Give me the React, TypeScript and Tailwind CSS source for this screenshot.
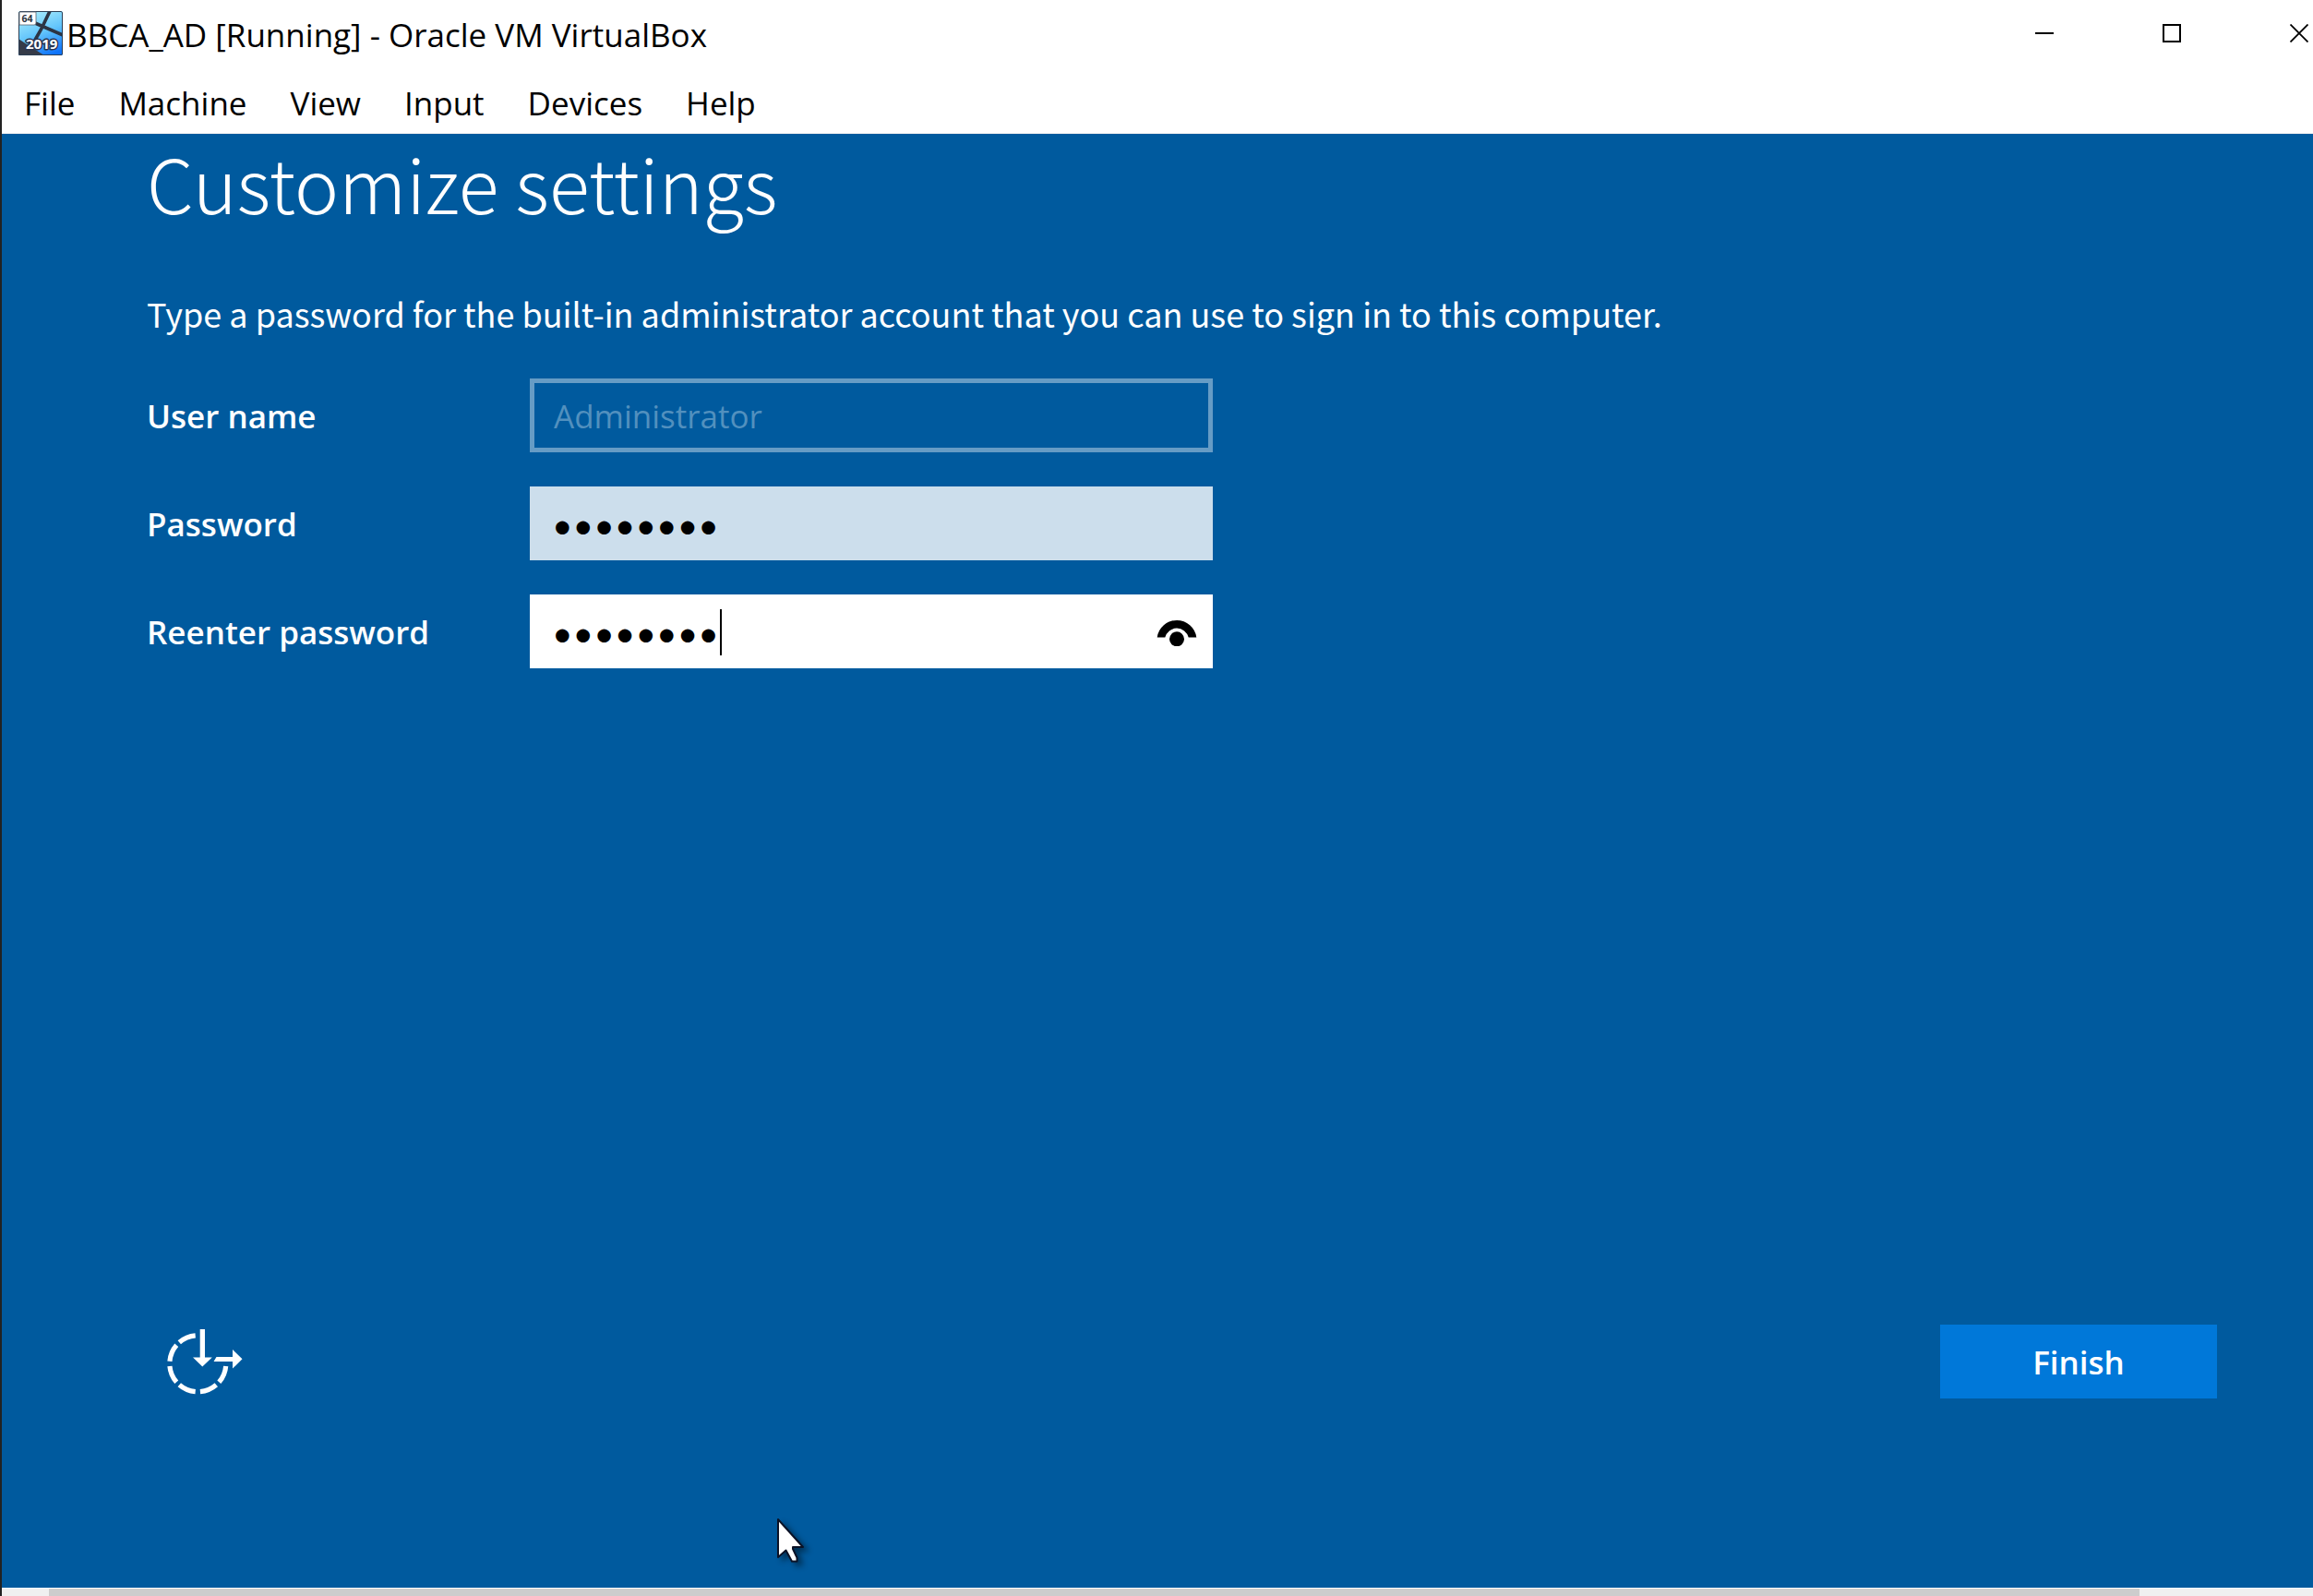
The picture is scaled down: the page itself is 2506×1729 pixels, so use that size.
import React, { useState } from 'react';

const menuItems = ['File', 'Machine', 'View', 'Input', 'Devices', 'Help'];

const GuestIcon: React.FC = () => (
  <svg viewBox="0 0 48 48" className="w-12 h-12 shrink-0" aria-hidden="true">
    <defs>
      <linearGradient id="sky" x1="0.3" y1="0" x2="0.7" y2="1">
        <stop offset="0" stopColor="#a9ecfc" />
        <stop offset="0.5" stopColor="#62c4fb" />
        <stop offset="1" stopColor="#0f74fa" />
      </linearGradient>
      <clipPath id="tile">
        <rect width="48" height="48" rx="1.5" />
      </clipPath>
    </defs>
    <g clipPath="url(#tile)">
      <rect width="48" height="48" fill="url(#sky)" />
      <path d="M34.500 -1 L25 19 L17 33 M18 13 L49 26.500" fill="none" stroke="#2c3444" strokeWidth="3.600" />
      <path d="M0 30 L9 36 L28 48 H0 Z" fill="#363b48" />
      <rect x="0.500" y="0.500" width="47" height="47" rx="1.500" fill="none" stroke="#2c3f55" />
      <path d="M1 1 H19 V13 a2 2 0 0 1 -2 2 H1 Z" fill="#fff" stroke="#59636f" strokeWidth="0.800" />
    </g>
    <text x="3.500" y="12" fontSize="10.500" fontWeight="700" fill="#2f3542" fontFamily="Open Sans, sans-serif">64</text>
    <text
      x="8"
      y="41"
      fontSize="15"
      fontWeight="700"
      fill="#fff"
      stroke="#2a3550"
      strokeWidth="3"
      paintOrder="stroke"
      strokeLinejoin="round"
      fontFamily="Open Sans, sans-serif"
    >
      2019
    </text>
  </svg>
);

const EaseOfAccessIcon: React.FC = () => (
  <svg viewBox="0 0 84 76" className="w-[84px] h-[76px]" aria-hidden="true">
    <circle
      cx="34.300"
      cy="40.300"
      r="30.500"
      fill="none"
      stroke="#fff"
      strokeWidth="5.200"
      pathLength="360"
      strokeDasharray="36 8 36 10 36 8 36 10 36 8 36 100"
      strokeDashoffset="-5"
    />
    <path d="M36.700 3 H42 V33.500 H49.800 L39.300 43.500 L29 33.500 H36.700 Z" fill="#fff" />
    <path d="M54.500 33 H72 V25 L82.500 35.300 L72 45.600 V38 H51.500 Z" fill="#fff" />
  </svg>
);

const Cursor: React.FC = () => (
  <svg
    viewBox="0 0 40 56"
    className="absolute left-[837px] top-[1642px] w-10 h-14 pointer-events-none drop-shadow-[5px_4px_3px_rgba(0,0,0,0.45)]"
    aria-hidden="true"
  >
    <path
      d="M4 4 V45 L12.500 37.500 L19 49.500 H24.500 V45.500 L20 36 V34 H31 Z"
      fill="#fff"
      stroke="#0b1226"
      strokeWidth="2"
      strokeLinejoin="round"
    />
  </svg>
);

const labelClass = 'pt-0.5 font-semibold';
const passwordClass = "w-full h-20 pt-0.5 pl-6 rounded-none outline-none text-black text-[39px] font-['Lato',sans-serif]";

const App: React.FC = () => {
  const [password, setPassword] = useState('password');
  const [confirm, setConfirm] = useState('password');
  const [reveal, setReveal] = useState(false);

  return (
    <div className="relative min-h-screen flex flex-col bg-white border-l-2 border-[#222222] text-black text-[35px] font-['Open_Sans',sans-serif] overflow-hidden">
      {/* Title bar */}
      <header className="flex items-center h-20 pb-2 pl-[18px]">
        <GuestIcon />
        <span className="pt-1 pl-1 leading-[48px] whitespace-nowrap">BBCA_AD [Running] - Oracle VM VirtualBox</span>
        <div className="flex ml-auto h-full">
          <button aria-label="Minimize" className="flex items-center justify-center w-[138px]">
            <span className="w-5 h-0.5 bg-black" />
          </button>
          <button aria-label="Maximize" className="flex items-center justify-center w-[138px]">
            <span className="w-5 h-5 border-2 border-black" />
          </button>
          <button aria-label="Close" className="flex items-center justify-end w-[84px] pr-[5px]">
            <svg viewBox="0 0 20 20" className="w-5 h-5" aria-hidden="true">
              <path d="M0.500 0.500 L19.500 19.500 M19.500 0.500 L0.500 19.500" stroke="#000" strokeWidth="1.800" />
            </svg>
          </button>
        </div>
      </header>

      {/* Menu bar */}
      <nav className="flex items-center gap-[47px] h-[65px] pl-6 border-b border-[#f0f0f0]">
        {menuItems.map((item) => (
          <button key={item} className="leading-[48px]">
            {item}
          </button>
        ))}
      </nav>

      {/* Guest screen */}
      <main className="flex-1 flex flex-col bg-[#005a9e] text-white pt-0.5 pl-[157px]">
        <h1 className="text-[81px] leading-[100px] font-light font-['Noto_Sans_CJK_SC',sans-serif]">Customize settings</h1>
        <p className="mt-17 text-[36px] leading-[48px] font-['Noto_Sans_CJK_SC',sans-serif]">
          Type a password for the built-in administrator account that you can use to sign in to this computer.
        </p>

        <form
          id="settings"
          className="grid grid-cols-[415px_740px] items-center gap-y-[37px] mt-[47px]"
          onSubmit={(e) => e.preventDefault()}
        >
          <label htmlFor="user" className={labelClass}>User name</label>
          <input
            id="user"
            type="text"
            value="Administrator"
            disabled
            className="w-full h-20 pl-[21px] rounded-none bg-transparent border-5 border-[#669cc5] text-[#5290be]"
          />

          <label htmlFor="password" className={labelClass}>Password</label>
          <input
            id="password"
            type="password"
            value={password}
            onChange={(e) => setPassword(e.target.value)}
            className={`${passwordClass} bg-[#ccdeec]`}
          />

          <label htmlFor="confirm" className={labelClass}>Reenter password</label>
          <div className="relative">
            <input
              id="confirm"
              type={reveal ? 'text' : 'password'}
              value={confirm}
              onChange={(e) => setConfirm(e.target.value)}
              className={`${passwordClass} bg-white caret-transparent`}
            />
            <span className="absolute left-[206px] top-4 w-0.5 h-[50px] bg-black" />
            <button
              type="button"
              aria-label="Show password"
              onClick={() => setReveal(!reveal)}
              className="absolute right-[17px] top-6"
            >
              <svg viewBox="0 -4 44 32" className="w-11 h-8" aria-hidden="true">
                <path d="M0.700 18.500 A21.500 21.500 0 0 1 43.300 18.500 H34.700 A13.100 13.100 0 0 0 9.300 18.500 Z" />
                <circle cx="22" cy="20.300" r="8" />
              </svg>
            </button>
          </div>
        </form>

        <footer className="flex items-center justify-between mt-auto mb-[205px] pl-[21px] pr-[104px]">
          <button aria-label="Ease of access">
            <EaseOfAccessIcon />
          </button>
          <button form="settings" className="w-[300px] h-20 pt-0.5 bg-[#0078d9] font-semibold">
            Finish
          </button>
        </footer>
      </main>

      {/* Horizontal scrollbar */}
      <div className="h-[9px] pl-[51px] pr-[188px] bg-[#f0f0f0] border-t border-white">
        <div className="h-full bg-[#cdcdcd]" />
      </div>

      <Cursor />
    </div>
  );
};

export default App;
